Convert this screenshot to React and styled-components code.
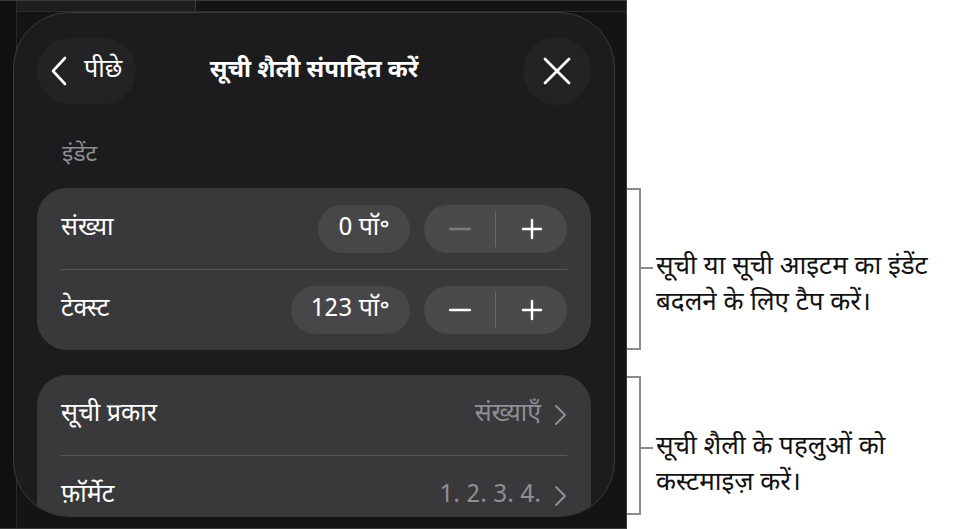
import React from "react";
import styled, { createGlobalStyle } from "styled-components";

const GlobalStyle = createGlobalStyle`
  html, body {
    margin: 0;
    padding: 0;
    background: #fff;
  }
  body {
    font-family: "Noto Sans Devanagari", "Noto Sans", "Liberation Sans", sans-serif;
  }
`;

const Page = styled.div`
  display: flex;
  width: 960px;
  height: 529px;
  overflow: hidden;
`;

const Screen = styled.div`
  box-sizing: border-box;
  width: 627px;
  height: 529px;
  flex-shrink: 0;
  border-top: 1px solid #3a3a3c;
  border-right: 1px solid #3a3a3c;
  border-bottom: 1px solid #3a3a3c;
  background:
    linear-gradient(#2e2e30, #2e2e30) 16px 10px / 611px 1px no-repeat,
    linear-gradient(#3a3a3c, #3a3a3c) 195px 0 / 1px 10px no-repeat,
    linear-gradient(#2a2a2c, #2a2a2c) 16px 0 / 1px 100% no-repeat,
    linear-gradient(#1e1e20, #1e1e20) 17px 0 / 178px 10px no-repeat,
    linear-gradient(#101011, #101011) 0 0 / 16px 100% no-repeat,
    #141416;
  padding: 11px 0 0 13px;
`;

const Sheet = styled.div`
  box-sizing: border-box;
  width: 602px;
  height: 505px;
  border: 1px solid #3a3a3c;
  border-radius: 56px;
  background: #1c1c1e;
  overflow: hidden;
  padding: 24px 23px 0 23px;
  color: #fff;
`;

const Header = styled.div`
  display: grid;
  grid-template-columns: 1fr auto 1fr;
  align-items: center;
  height: 66px;
`;

const BackButton = styled.div`
  justify-self: start;
  display: flex;
  align-items: center;
  gap: 16px;
  height: 66px;
  padding: 0 14px 0 13px;
  border-radius: 33px;
  background: #232325;
  font-size: 25px;
`;

const Title = styled.div`
  font-size: 24px;
  font-weight: 700;
`;

const CloseButton = styled.div`
  justify-self: end;
  width: 68px;
  height: 68px;
  border-radius: 50%;
  background: #232325;
  display: flex;
  align-items: center;
  justify-content: center;
`;

const SectionLabel = styled.div`
  box-sizing: border-box;
  height: 85px;
  padding: 37px 0 0 25px;
  color: #8e8e93;
  font-size: 23px;
  line-height: 30px;
`;

const Card = styled.div`
  background: #39393b;
  border-radius: 30px;
  padding: 0 24px;
  margin-bottom: ${(p) => p.$gap || 0}px;
`;

const Row = styled.div`
  display: flex;
  align-items: center;
  height: ${(p) => p.$h || 81}px;
  border-top: ${(p) => (p.$divider ? "1px solid #58585a" : "none")};
  box-sizing: border-box;
`;

const Label = styled.div`
  flex: 1;
  font-size: 25px;
`;

const ValuePill = styled.div`
  height: 48px;
  padding: 0 20px;
  border-radius: 24px;
  background: #474749;
  display: flex;
  align-items: center;
  font-size: 25px;
  margin-right: 14px;
`;

const Stepper = styled.div`
  display: flex;
  align-items: center;
  width: 143px;
  height: 48px;
  border-radius: 24px;
  background: #4a4a4c;
`;

const StepHalf = styled.div`
  flex: 1;
  display: flex;
  align-items: center;
  justify-content: center;
`;

const StepDivider = styled.div`
  width: 1px;
  height: 36px;
  background: #6a6a6c;
`;

const Detail = styled.div`
  display: flex;
  align-items: center;
  gap: 13px;
  color: #8e8e93;
  font-size: 25px;
`;

const Callouts = styled.div`
  flex: 1;
  background: #fff;
  padding-top: 188px;
  color: #111;
`;

const Callout = styled.div`
  display: flex;
  height: ${(p) => p.$h}px;
  margin-bottom: ${(p) => p.$gap || 0}px;
`;

const Bracket = styled.div`
  box-sizing: border-box;
  width: 14px;
  height: 100%;
  border: 2px solid #8c8c8c;
  border-left: none;
`;

const Note = styled.div`
  display: flex;
  align-items: flex-start;
  padding-top: ${(p) => p.$top}px;
`;

const Tick = styled.div`
  width: 12px;
  height: 2px;
  background: #8c8c8c;
  margin-top: 17px;
  margin-right: 3px;
`;

const NoteText = styled.div`
  font-size: 26px;
  line-height: 36px;
  white-space: nowrap;
`;

const Minus = ({ dim }) => (
  <svg width="22" height="22" viewBox="0 0 22 22">
    <line x1="1" y1="11" x2="21" y2="11" stroke={dim ? "#7a7a7c" : "#fff"} strokeWidth="2.4" strokeLinecap="round" />
  </svg>
);

const Plus = () => (
  <svg width="22" height="22" viewBox="0 0 22 22">
    <line x1="2" y1="11" x2="20" y2="11" stroke="#fff" strokeWidth="2.4" strokeLinecap="round" />
    <line x1="11" y1="2" x2="11" y2="20" stroke="#fff" strokeWidth="2.4" strokeLinecap="round" />
  </svg>
);

const Chevron = () => (
  <svg width="13" height="22" viewBox="0 0 13 22">
    <polyline points="2,2 11,11 2,20" fill="none" stroke="#8e8e93" strokeWidth="2" strokeLinecap="round" strokeLinejoin="round" />
  </svg>
);

const Step = ({ dimMinus }) => (
  <Stepper>
    <StepHalf>
      <Minus dim={dimMinus} />
    </StepHalf>
    <StepDivider />
    <StepHalf>
      <Plus />
    </StepHalf>
  </Stepper>
);

export default function App() {
  return (
    <Page>
      <GlobalStyle />
      <Screen>
        <Sheet>
          <Header>
            <BackButton>
              <svg width="18" height="30" viewBox="0 0 18 30">
                <polyline points="15,2 3,15 15,28" fill="none" stroke="#fff" strokeWidth="2.6" strokeLinecap="round" strokeLinejoin="round" />
              </svg>
              पीछे
            </BackButton>
            <Title>सूची शैली संपादित करें</Title>
            <CloseButton>
              <svg width="28" height="28" viewBox="0 0 28 28">
                <line x1="2" y1="2" x2="26" y2="26" stroke="#fff" strokeWidth="2.8" strokeLinecap="round" />
                <line x1="26" y1="2" x2="2" y2="26" stroke="#fff" strokeWidth="2.8" strokeLinecap="round" />
              </svg>
            </CloseButton>
          </Header>

          <SectionLabel>इंडेंट</SectionLabel>

          <Card $gap={25}>
            <Row>
              <Label>संख्या</Label>
              <ValuePill>0 पॉ॰</ValuePill>
              <Step dimMinus />
            </Row>
            <Row $divider>
              <Label>टेक्स्ट</Label>
              <ValuePill>123 पॉ॰</ValuePill>
              <Step />
            </Row>
          </Card>

          <Card>
            <Row $h={80}>
              <Label>सूची प्रकार</Label>
              <Detail>
                संख्याएँ
                <Chevron />
              </Detail>
            </Row>
            <Row $h={80} $divider>
              <Label>फ़ॉर्मेट</Label>
              <Detail>
                1. 2. 3. 4.
                <Chevron />
              </Detail>
            </Row>
          </Card>
        </Sheet>
      </Screen>

      <Callouts>
        <Callout $h={162} $gap={26}>
          <Bracket />
          <Note $top={62}>
            <Tick />
            <NoteText>
              सूची या सूची आइटम का इंडेंट
              <br />
              बदलने के लिए टैप करें।
            </NoteText>
          </Note>
        </Callout>
        <Callout $h={139}>
          <Bracket />
          <Note $top={54}>
            <Tick />
            <NoteText>
              सूची शैली के पहलुओं को
              <br />
              कस्टमाइज़ करें।
            </NoteText>
          </Note>
        </Callout>
      </Callouts>
    </Page>
  );
}
